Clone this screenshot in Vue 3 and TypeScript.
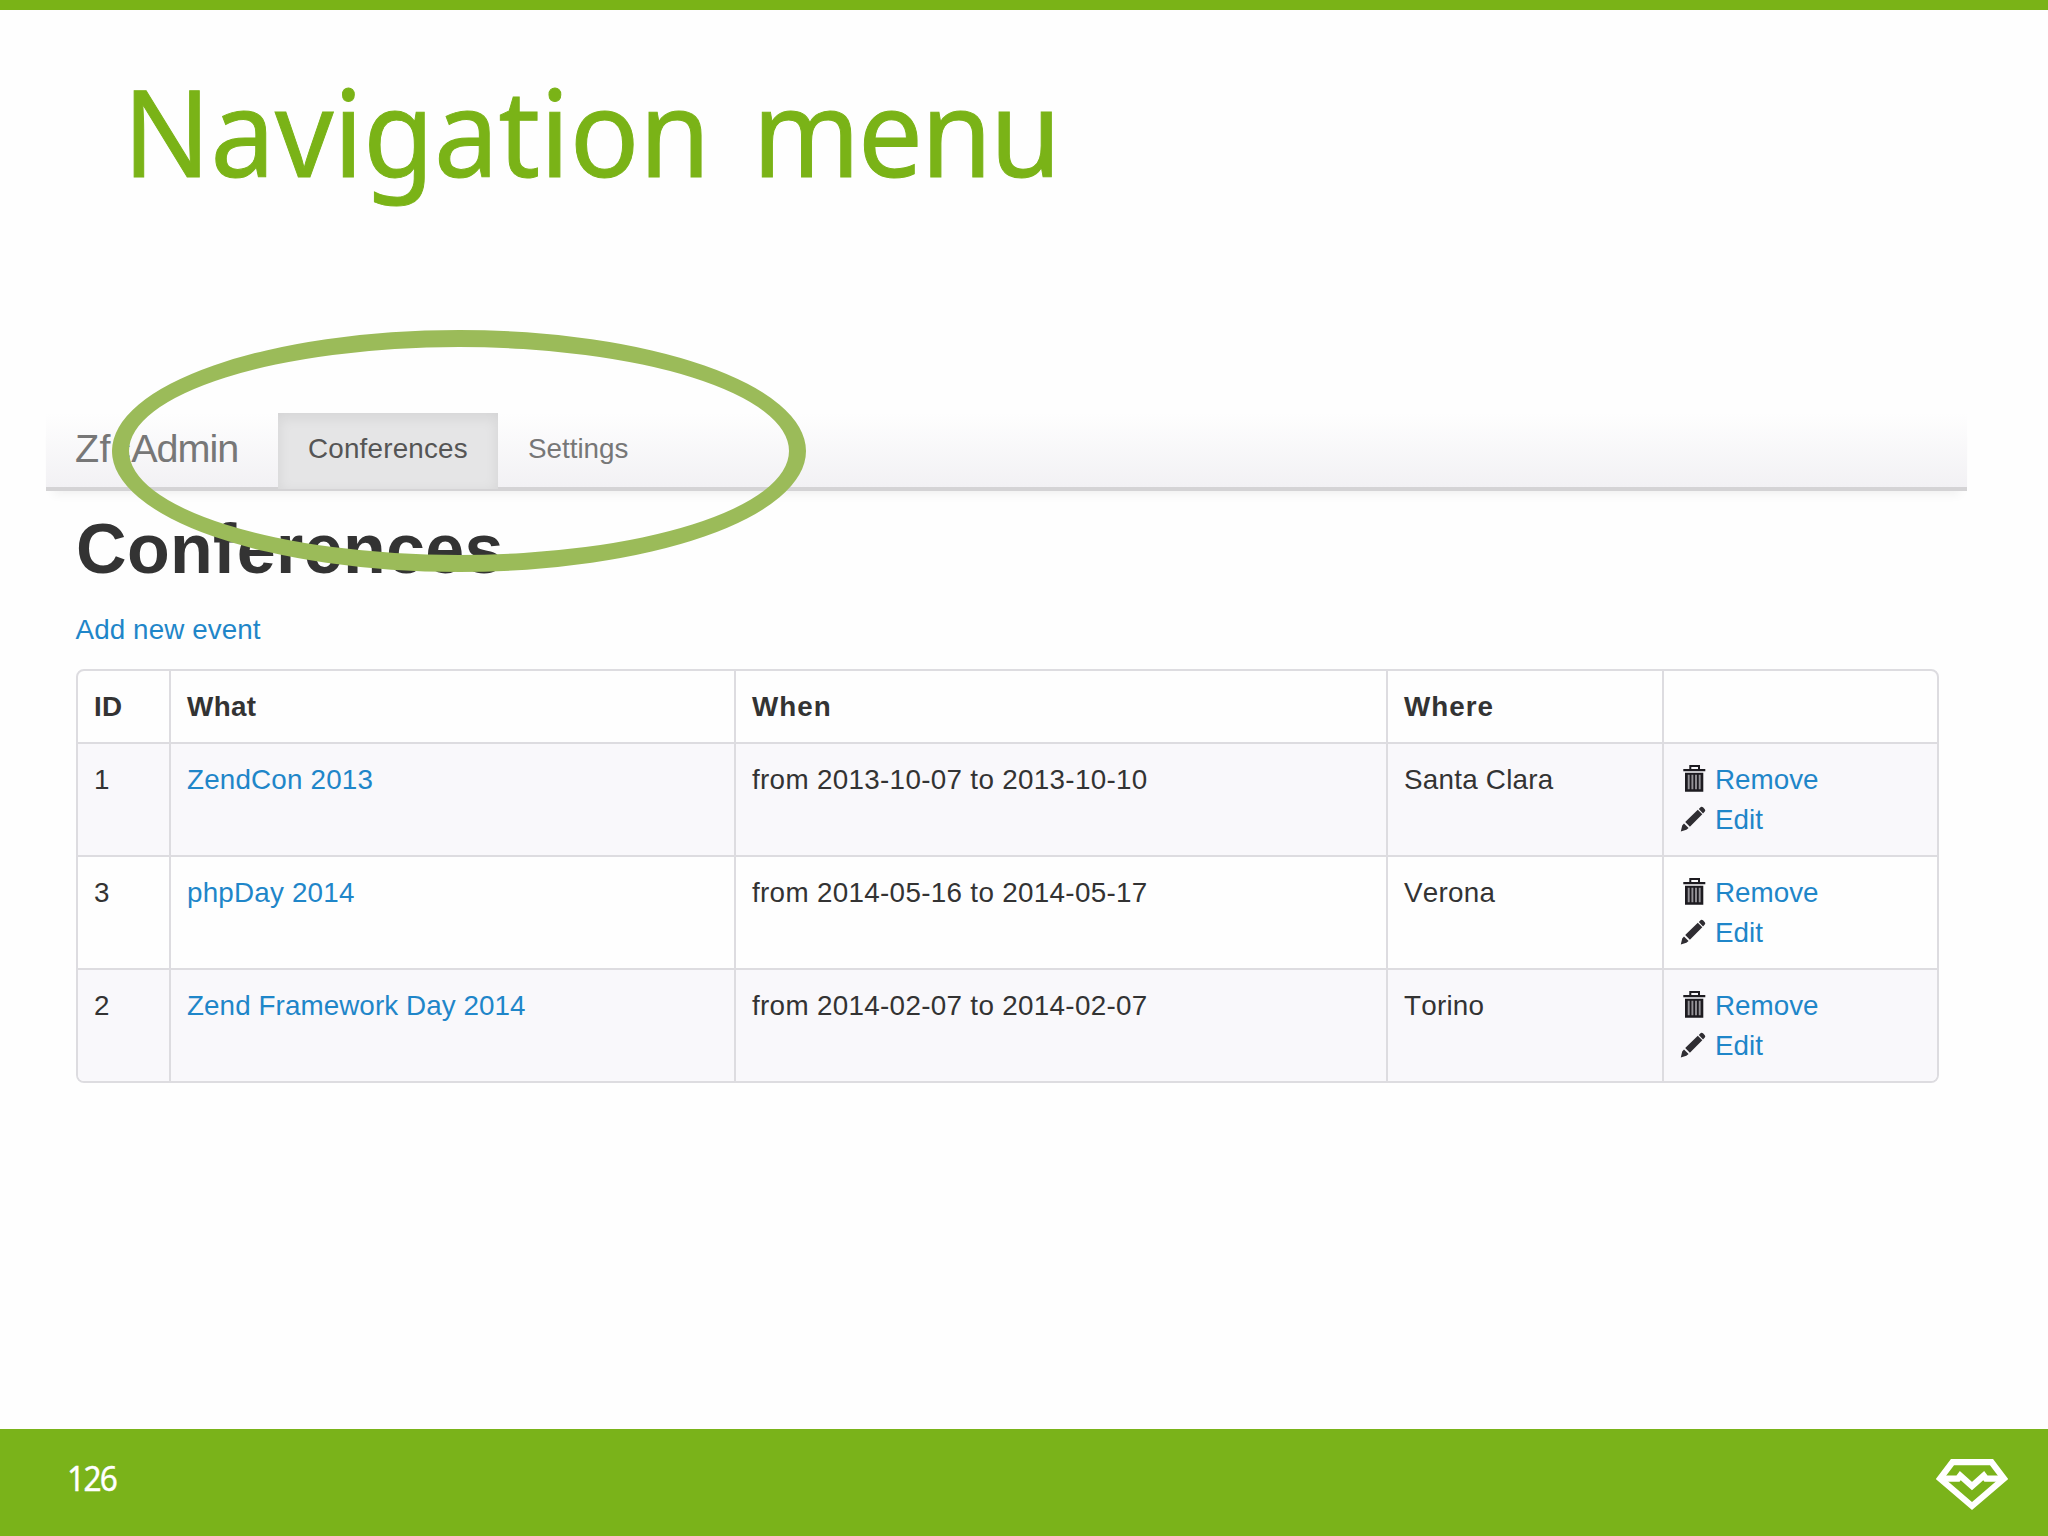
<script setup lang="ts">
interface Conference {
  id: number
  name: string
  nameSpacing: string
  when: string
  where: string
}

const pageNumber = 126

const conferences: Conference[] = [
  { id: 1, name: 'ZendCon 2013', nameSpacing: '0.18px', when: 'from 2013-10-07 to 2013-10-10', where: 'Santa Clara' },
  { id: 3, name: 'phpDay 2014', nameSpacing: '0.2px', when: 'from 2014-05-16 to 2014-05-17', where: 'Verona' },
  { id: 2, name: 'Zend Framework Day 2014', nameSpacing: '0.08px', when: 'from 2014-02-07 to 2014-02-07', where: 'Torino' },
]
</script>

<template>
  <div class="slide">
    <header class="slide-head">
      <h1 class="title">Navigation <span class="tight">menu</span></h1>
    </header>

    <main class="app">
      <nav class="navbar">
        <a class="brand"><span class="prefix">Zfc</span>Admin</a>
        <a class="tab active">Conferences</a>
        <a class="tab settings">Settings</a>
      </nav>

      <section class="content">
        <h2 class="heading">Conferences</h2>
        <a class="link add">Add new event</a>

        <div class="grid">
          <div class="row head">
            <div class="cell">ID</div>
            <div class="cell">What</div>
            <div class="cell wide">When</div>
            <div class="cell wide">Where</div>
            <div class="cell"></div>
          </div>
          <div v-for="c in conferences" :key="c.id" class="row">
            <div class="cell">{{ c.id }}</div>
            <div class="cell"><a class="link" :style="{ letterSpacing: c.nameSpacing }">{{ c.name }}</a></div>
            <div class="cell when">{{ c.when }}</div>
            <div class="cell where">{{ c.where }}</div>
            <div class="cell">
              <div class="action">
                <svg class="icon" viewBox="0 0 28 28">
                  <path fill="#1d1b20" fill-rule="evenodd" d="M9.3 0H20v4h5.3v2.2h-22V4h6zM11.3 2v2H18V2zM5 7.7h18.3v19H5z" />
                  <path stroke="#949297" stroke-width="1.9" d="M8.7 9.8v14.4M12.4 9.8v14.4M16 9.8v14.4M19.7 9.8v14.4" />
                </svg>
                <a class="link">Remove</a>
              </div>
              <div class="action">
                <svg class="icon" viewBox="0 0 28 28">
                  <path fill="#2f2d32" d="M18.8 4 20.8 2Q21.8 1.2 23 2.3L24.8 4.2Q25.8 5.4 24.8 6.4L23 8.4zM17.8 4.8 22.3 9.3 9.9 21.8 5.2 17.1zM4 18.4 8.6 23 6.4 24.8 0.8 26.4 2.2 20.6z" />
                </svg>
                <a class="link">Edit</a>
              </div>
            </div>
          </div>
        </div>
      </section>

      <div class="ring"></div>
    </main>

    <footer class="slide-foot">
      <span class="page">{{ pageNumber }}</span>
      <svg class="logo" viewBox="0 0 72 52">
        <g fill="none" stroke="#fff" stroke-width="6.2">
          <path d="M16.5 3.1H55.5L68 19.7 36 47 4 19.7z" />
          <path d="M4 19.7H22L24.3 16.6 36 27 47.7 16.6 50 19.7H68" />
        </g>
      </svg>
    </footer>
  </div>
</template>

<style>
body {
  margin: 0;
  background: #fefefe;
}
</style>

<style scoped>
.slide {
  display: flex;
  flex-direction: column;
  box-sizing: border-box;
  width: 2048px;
  height: 1536px;
  overflow: hidden;
  border-top: 10px solid #7ab317;
  background: #fefefe;
  color: #333;
  font: 27.8px/39.6px "Liberation Sans", Arial, sans-serif;
  font-kerning: none;
}

.slide-head {
  flex: none;
  height: 403px;
}

.title {
  display: inline-block;
  margin: 36px 0 0 123px;
  color: #7ab317;
  font: 400 121.5px/168px "Noto Sans", sans-serif;
  word-spacing: 13px;
  white-space: nowrap;
  transform: scaleX(0.947);
  transform-origin: left;
  -webkit-text-stroke: 1px #7ab317;
}

.tight {
  letter-spacing: -2.2px;
}

.app {
  position: relative;
  flex: 1;
}

.navbar {
  display: flex;
  box-sizing: border-box;
  width: 1921px;
  height: 78px;
  margin-left: 46px;
  border-bottom: 4px solid #d4d3d5;
  background: linear-gradient(#fefefe, #f2f1f4);
  box-shadow: 0 10px 10px -7px rgba(0, 0, 0, 0.06);
  color: #777;
  white-space: nowrap;
}

.brand {
  width: 203px;
  padding: 15px 0 0 29px;
  font-size: 39.6px;
  line-height: 40px;
  letter-spacing: -1px;
}

.prefix {
  letter-spacing: 0.4px;
}

.tab {
  box-sizing: border-box;
  height: 76px;
  padding: 16px 30px 0;
}

.active {
  width: 220px;
  background: #e5e5e6;
  box-shadow: inset 0 4px 14px rgba(0, 0, 0, 0.08);
  color: #555;
  letter-spacing: 0.2px;
}

.content {
  display: flex;
  flex-direction: column;
  align-items: flex-start;
  margin-left: 76px;
}

.heading {
  margin: 18px 0 0;
  font-size: 70px;
  line-height: 80px;
  letter-spacing: 0.35px;
}

.link {
  color: #1f86c9;
}

.add {
  margin: 21px 0 0 -0.5px;
  letter-spacing: 0.1px;
}

.grid {
  box-sizing: border-box;
  width: 1863px;
  margin-top: 19px;
  overflow: hidden;
  border: 2px solid #dddce0;
  border-radius: 8px;
}

.row {
  display: grid;
  grid-template-columns: 91px 565px 652px 276px 1fr;
  height: 113px;
}

.row:nth-child(even) {
  background: #f9f8fb;
}

.row:nth-child(4) {
  background: #f9f8fb;
}

.row + .row {
  box-sizing: border-box;
  border-top: 2px solid #dddce0;
}

.head {
  height: 71px;
  font-weight: 700;
  letter-spacing: 0.4px;
}

.cell {
  padding: 16.6px 0 0 16px;
  white-space: nowrap;
}

.cell + .cell {
  border-left: 2px solid #dddce0;
}

.wide {
  letter-spacing: 1px;
}

.when {
  letter-spacing: 0.32px;
}

.where {
  letter-spacing: 0.25px;
}

.action {
  display: flex;
  gap: 7px;
}

.icon {
  flex: none;
  width: 28px;
  height: 28px;
  margin-top: 5px;
}

/* Highlight drawn over the navigation bar */
.ring {
  position: absolute;
  top: -83px;
  left: 112px;
  box-sizing: border-box;
  width: 694px;
  height: 242px;
  border: 17px solid #9bbb59;
  border-radius: 50%;
}

.slide-foot {
  display: flex;
  flex: none;
  align-items: flex-start;
  justify-content: space-between;
  box-sizing: border-box;
  height: 107px;
  padding: 30px 40px 0 67px;
  background: #7ab31a;
}

.page {
  margin-top: -4px;
  color: #fff;
  font: 34px/46px "Noto Sans", sans-serif;
  letter-spacing: -1.8px;
  transform: scaleX(0.93);
  transform-origin: left;
  -webkit-text-stroke: 0.4px #fff;
}

.logo {
  width: 72px;
  height: 52px;
}
</style>
